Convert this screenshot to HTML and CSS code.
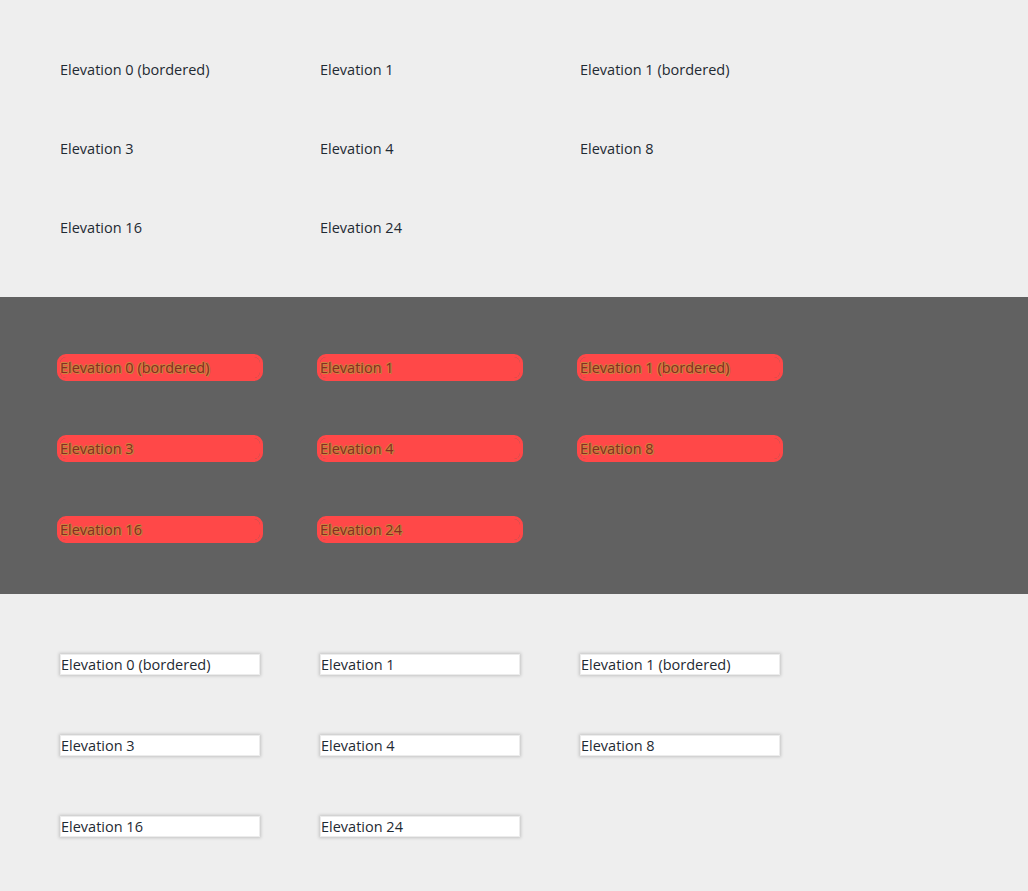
FILE: index.html
```html
<!DOCTYPE html>
<html>
<head>
<meta charset="utf-8">
<link rel="stylesheet" href="styles.css">
</head>
<body>
<section class="sec light">
  <div class="grid plain-grid">
    <div class="cell plain">Elevation 0 (bordered)</div>
    <div class="cell plain">Elevation 1</div>
    <div class="cell plain">Elevation 1 (bordered)</div>
    <div class="cell plain">Elevation 3</div>
    <div class="cell plain">Elevation 4</div>
    <div class="cell plain">Elevation 8</div>
    <div class="cell plain">Elevation 16</div>
    <div class="cell plain">Elevation 24</div>
  </div>
</section>
<section class="sec dark">
  <div class="grid">
    <div class="cell red">Elevation 0 (bordered)</div>
    <div class="cell red">Elevation 1</div>
    <div class="cell red">Elevation 1 (bordered)</div>
    <div class="cell red">Elevation 3</div>
    <div class="cell red">Elevation 4</div>
    <div class="cell red">Elevation 8</div>
    <div class="cell red">Elevation 16</div>
    <div class="cell red">Elevation 24</div>
  </div>
</section>
<section class="sec light">
  <div class="grid">
    <div class="cell card">Elevation 0 (bordered)</div>
    <div class="cell card">Elevation 1</div>
    <div class="cell card">Elevation 1 (bordered)</div>
    <div class="cell card">Elevation 3</div>
    <div class="cell card">Elevation 4</div>
    <div class="cell card">Elevation 8</div>
    <div class="cell card">Elevation 16</div>
    <div class="cell card">Elevation 24</div>
  </div>
</section>
</body>
</html>
```
FILE: styles.css
```css
html, body {
  margin: 0;
  padding: 0;
}
body {
  font-family: "Open Sans", "Noto Sans", sans-serif;
  font-size: 14.5px;
  color: #222;
  background: #eeeeee;
}
.sec {
  height: 297px;
  box-sizing: border-box;
  padding: 60px 60px 0 60px;
}
.light {
  background: #eeeeee;
}
.dark {
  background: #616161;
}
.grid {
  display: grid;
  grid-template-columns: repeat(3, 200px);
  column-gap: 60px;
  row-gap: 60px;
  grid-auto-rows: 21px;
}
.plain-grid {
  grid-auto-rows: 19px;
}
.cell {
  box-sizing: border-box;
  height: 21px;
  line-height: 21px;
  white-space: nowrap;
}
.plain {
  height: 19px;
  line-height: 19px;
  color: #1f2a33;
}
.red {
  color: #8a2824;
  text-shadow: 1px 1px 0 #c4873c, -1px 0 0 #c4873c, 0 -1px 0 #c4873c, 1px 0 0 #c4873c;
  background: #ff4848;
  border-radius: 6px;
  outline: 3px solid #ff4848;
  outline-offset: 0;
}
.card {
  background: #ffffff;
  color: #1f2a33;
  border: 1px solid #ececec;
  line-height: 19px;
  box-shadow: 0 0 3px 1px rgba(0, 0, 0, 0.18);
}
```
